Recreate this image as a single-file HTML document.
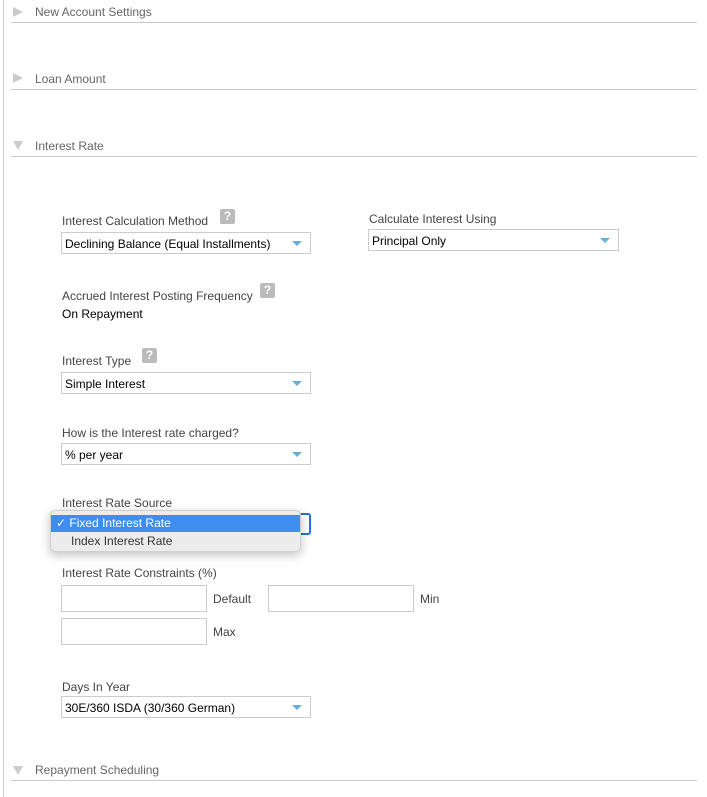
<!DOCTYPE html>
<html><head><meta charset="utf-8"><style>
*{box-sizing:border-box;margin:0;padding:0}
body{width:707px;height:797px;background:#fff;font-family:"Liberation Sans",sans-serif;position:relative;overflow:hidden;color:#000}
.a{position:absolute}
.vl{left:3px;top:0;width:1px;height:797px;background:#d0d0d0}
.hd{left:35px;font-size:12px;color:#666}
.tri{left:13px;width:0;height:0}
.tr{border-top:5px solid transparent;border-bottom:5px solid transparent;border-left:10px solid #ccc}
.td{border-left:5px solid transparent;border-right:5px solid transparent;border-top:9px solid #ccc}
.ln{left:11px;width:686px;height:1px;background:#ccc}
.lb{font-size:12px;color:#444}
.sel{height:22px;border:1px solid #ccc;font-size:12px;padding:4px 0 0 3px;background:#fff}
.sel:after{content:"";position:absolute;right:8px;top:8px;border-left:5px solid transparent;border-right:5px solid transparent;border-top:5px solid #6aaed6}
.q{width:15px;height:15px;background:#bbb;border-radius:2px;color:#fff;font-size:12px;font-weight:bold;text-align:center;line-height:15px}
.in{height:27px;border:1px solid #ccc;background:#fff}
</style></head><body>
<div class="a vl"></div>
<div class="a tri tr" style="top:7px"></div><div class="a hd" style="top:5px">New Account Settings</div><div class="a ln" style="top:22px"></div>
<div class="a tri tr" style="top:73px"></div><div class="a hd" style="top:72px">Loan Amount</div><div class="a ln" style="top:89px"></div>
<div class="a tri td" style="top:141px"></div><div class="a hd" style="top:139px">Interest Rate</div><div class="a ln" style="top:156px"></div>

<div class="a lb" style="left:62px;top:214px">Interest Calculation Method</div><div class="a q" style="left:220px;top:209px">?</div>
<div class="a sel" style="left:61px;top:232px;width:250px">Declining Balance (Equal Installments)</div>
<div class="a lb" style="left:369px;top:212px">Calculate Interest Using</div>
<div class="a sel" style="left:368px;top:229px;width:251px">Principal Only</div>

<div class="a lb" style="left:62px;top:289px">Accrued Interest Posting Frequency</div><div class="a q" style="left:260px;top:283px">?</div>
<div class="a" style="left:62px;top:307px;font-size:12px">On Repayment</div>

<div class="a lb" style="left:62px;top:354px">Interest Type</div><div class="a q" style="left:142px;top:348px">?</div>
<div class="a sel" style="left:61px;top:372px;width:250px">Simple Interest</div>

<div class="a lb" style="left:62px;top:426px">How is the Interest rate charged?</div>
<div class="a sel" style="left:61px;top:443px;width:250px">% per year</div>

<div class="a lb" style="left:62px;top:496px">Interest Rate Source</div>
<div class="a" style="left:61px;top:513px;width:250px;height:22px;border:2px solid #2a6fd6;border-radius:3px"></div>
<div class="a" style="left:50px;top:510px;width:251px;height:42px;background:#ececec;border:1px solid #d0d0d0;border-radius:5px;box-shadow:0 3px 10px rgba(0,0,0,.25);overflow:hidden">
<div style="height:17px;margin-top:4px;background:#3d8ef0;color:#fff;font-size:12px;padding:1px 0 0 5px">✓ Fixed Interest Rate</div>
<div style="font-size:12px;color:#333;padding:2px 0 0 20px">Index Interest Rate</div>
</div>

<div class="a lb" style="left:62px;top:566px">Interest Rate Constraints (%)</div>
<div class="a in" style="left:61px;top:585px;width:146px"></div><div class="a lb" style="left:213px;top:592px">Default</div>
<div class="a in" style="left:268px;top:585px;width:146px"></div><div class="a lb" style="left:420px;top:592px">Min</div>
<div class="a in" style="left:61px;top:618px;width:146px"></div><div class="a lb" style="left:213px;top:625px">Max</div>

<div class="a lb" style="left:62px;top:680px">Days In Year</div>
<div class="a sel" style="left:61px;top:696px;width:250px">30E/360 ISDA (30/360 German)</div>

<div class="a tri td" style="top:766px"></div><div class="a hd" style="top:763px">Repayment Scheduling</div><div class="a ln" style="top:780px"></div>
</body></html>
